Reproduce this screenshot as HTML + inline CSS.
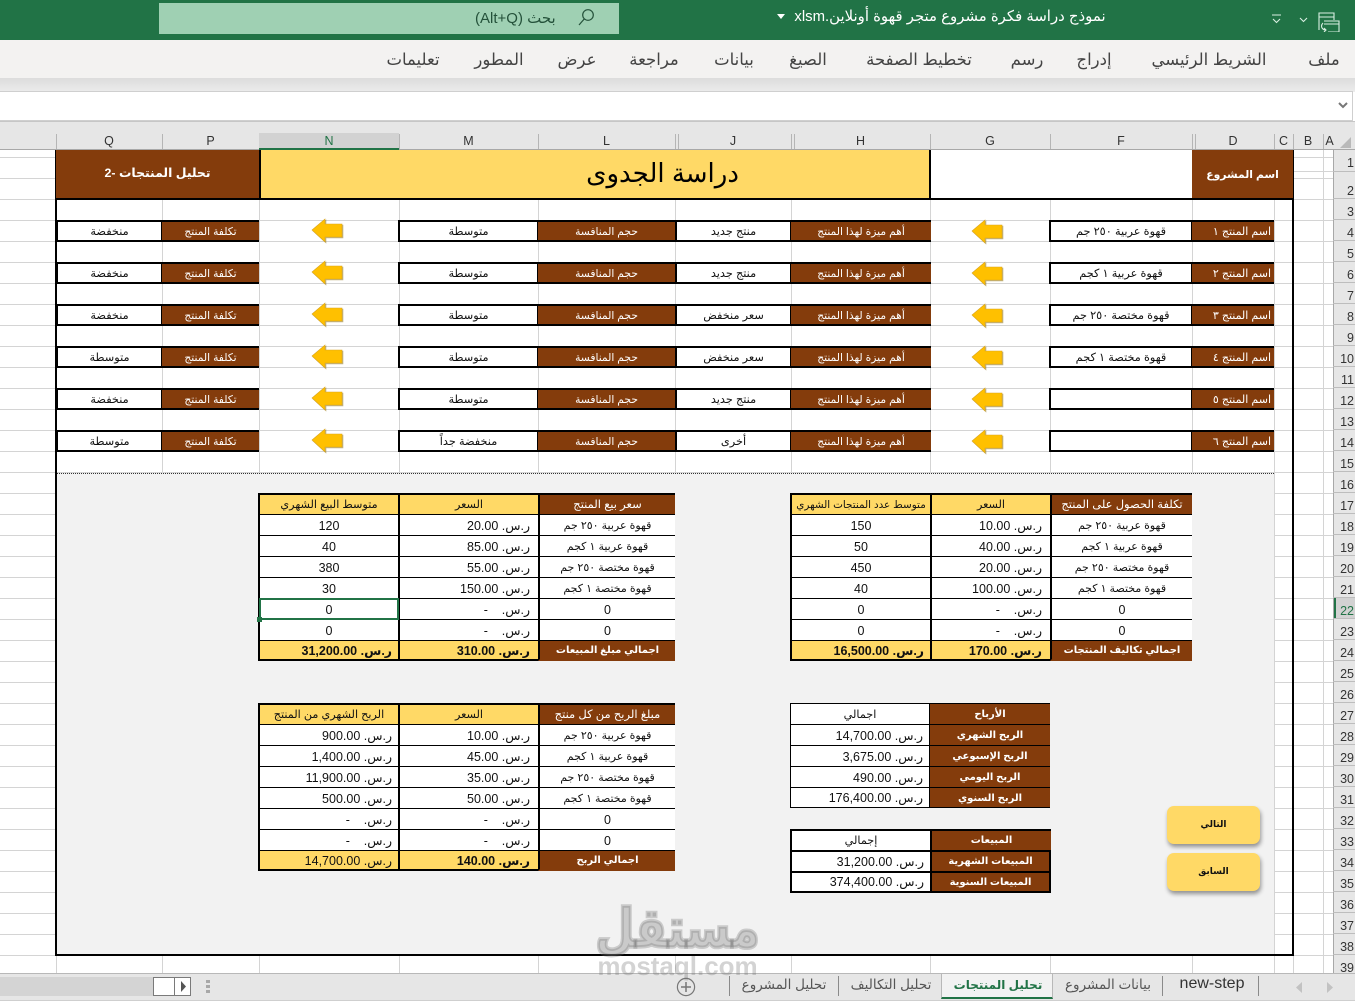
<!DOCTYPE html>
<html lang="ar"><head><meta charset="utf-8"><title>Excel</title>
<style>
*{box-sizing:border-box;margin:0;padding:0}
html,body{width:1355px;height:1001px;overflow:hidden;background:#fff;font-family:"Liberation Sans","DejaVu Sans",sans-serif;color:#111}
.a{position:absolute}
.t{position:absolute;white-space:nowrap;transform:translateX(-50%);direction:rtl}
.rib{top:50px;font-size:16.5px;line-height:20px;color:#444}
.cl{position:absolute;top:133px;height:16px;line-height:17px;text-align:center;font-size:12.5px;color:#333}
.v{position:absolute;top:150px;height:823px;width:1px;background:#d4d4d4}
.chs{position:absolute;top:134px;height:15px;width:1px;background:#b5b5b5}
#rows{position:absolute;left:1333px;top:199px;width:22px}
#rows i{display:block;height:21px;font-style:normal;font-size:12.5px;line-height:27px;text-align:right;padding-right:1px;color:#333;border-bottom:1px solid #bdbdbd}
.c{position:absolute;display:flex;align-items:center;justify-content:center;direction:rtl;white-space:nowrap;font-size:10.7px;height:22px}
.br{background:#843c0c;color:#fff}
.wb{background:#fff;border:2px solid #000;font-size:11.3px}
.br.x{border-top:2px solid #000;border-bottom:2px solid #000}
.br.n{justify-content:flex-start;padding-right:3px;font-size:11px}
table{position:absolute;border-collapse:separate;border-spacing:0;table-layout:fixed;font-size:12.5px}
td{height:21px;border-top:1px solid #000;text-align:center;white-space:nowrap;overflow:hidden;background:#fff;padding:2px 0 0;direction:rtl;line-height:18px}
td+td{border-left:2px solid #000}
td:first-child{border-left:2px solid #000}
tr:first-child td{border-top:2px solid #000;line-height:17px}
tr:last-child td{border-bottom:2px solid #000;line-height:16px;font-weight:bold}
td.y{background:#ffd966}
td.h{font-size:11.2px}
td.b{background:#843c0c;color:#fff;font-size:11.5px}
tr:last-child td.b{font-size:10px;border-bottom-color:#843c0c}
td.p{text-align:right;padding-right:8px}
td.p:first-child{padding-right:6px}
td.q{font-size:11px}
.thin td{border-left-width:1px!important;border-top-width:1px!important}
.thin tr:first-child td{line-height:18px}
.thin tr:last-child td{border-bottom-width:1px;line-height:17px;font-weight:normal}
.thin td.b,.thin tr:last-child td.b{font-weight:bold;font-size:10px;border-bottom-color:#000}
.thick td,.thick tr:first-child td{border-width:2px 0 0 2px;padding-top:1px;line-height:18px}
.thick td.b{font-weight:bold;font-size:10px}
.thick tr:last-child td{font-weight:normal;border-bottom:2px solid #000;line-height:17px}
.thick tr:last-child td.b{font-weight:bold;border-bottom:2px solid #000}
.thick td:last-child{border-right:2px solid #000}
.btn{position:absolute;left:1167px;width:93px;height:38px;border-radius:7px;background:#ffd966;box-shadow:1px 3px 4px rgba(0,0,0,.4);font-size:9px;font-weight:bold;display:flex;align-items:center;justify-content:center;direction:rtl;padding-bottom:2px}
.tab{position:absolute;top:975px;font-size:13.5px;line-height:20px;color:#555;white-space:nowrap;transform:translateX(-50%);direction:rtl}
.sep{position:absolute;top:976px;width:1px;height:20px;background:#8a8a8a}
</style></head><body>

<!-- title bar -->
<div class="a" style="left:0;top:0;width:1355px;height:40px;background:#217346"></div>
<div class="a" style="left:159px;top:3px;width:460px;height:31px;background:#9fd0b3"></div>
<div class="a" style="left:475px;top:10px;font-size:15px;line-height:18px;color:#24513a;direction:rtl;white-space:nowrap">بحث (Alt+Q)</div>
<svg class="a" style="left:576px;top:7px" width="20" height="20" viewBox="0 0 20 20" fill="none" stroke="#24513a" stroke-width="1.2"><circle cx="12" cy="8" r="5.3"/><path d="M8.2 12L3 18"/></svg>
<div class="t" style="left:950px;top:8px;font-size:14.9px;line-height:18px;color:#fff">نموذج دراسة فكرة مشروع متجر قهوة أونلاين.xlsm</div>
<svg class="a" style="left:777px;top:14px" width="8" height="6"><path d="M0 0h8L4 5z" fill="#fff"/></svg>
<svg class="a" style="left:1270px;top:12px" width="75" height="20" viewBox="0 0 75 20" fill="none" stroke="#d9efe2" stroke-width="1.1"><path d="M2 3h9M3 7l3.5 3.5L10 7M30 6l3.5 3.5L37 6"/><path d="M49 1h15v4H49zM49 5v13M64 5v3M54 9h15v11H58M54 12h15"/><path d="M53 11c-3 3-1 7 3 7m-2-2l2 2-2 2"/></svg>

<!-- ribbon -->
<div class="a" style="left:0;top:40px;width:1355px;height:38px;background:#f3f2f1"></div>
<div class="a" style="left:0;top:78px;width:1355px;height:14px;background:linear-gradient(#dcdcdc,#ececec)"></div>
<div class="t rib" style="left:1324px">ملف</div>
<div class="t rib" style="left:1209px">الشريط الرئيسي</div>
<div class="t rib" style="left:1094px">إدراج</div>
<div class="t rib" style="left:1027px">رسم</div>
<div class="t rib" style="left:919px">تخطيط الصفحة</div>
<div class="t rib" style="left:808px">الصيغ</div>
<div class="t rib" style="left:734px">بيانات</div>
<div class="t rib" style="left:654px">مراجعة</div>
<div class="t rib" style="left:577px">عرض</div>
<div class="t rib" style="left:499px">المطور</div>
<div class="t rib" style="left:413px">تعليمات</div>

<!-- formula bar -->
<div class="a" style="left:-2px;top:91px;width:1355px;height:30px;background:#fff;border:1px solid #cfcfcf"></div>
<svg class="a" style="left:1338px;top:102px" width="10" height="8"><path d="M1 1l4 4 4-4" fill="none" stroke="#777" stroke-width="2"/></svg>
<div class="a" style="left:0;top:121px;width:1355px;height:29px;background:#e6e6e6;border-top:1px solid #c6c6c6;border-bottom:1px solid #a8a8a8"></div>

<!-- col headers -->
<div class="a" style="left:259px;top:133px;width:140px;height:17px;background:#d2d2d2;border-bottom:2px solid #217346"></div>
<div class="cl" style="left:56px;width:106px">Q</div>
<div class="cl" style="left:162px;width:97px">P</div>
<div class="cl" style="left:259px;width:140px;color:#217346">N</div>
<div class="cl" style="left:399px;width:139px">M</div>
<div class="cl" style="left:538px;width:137px">L</div>
<div class="cl" style="left:675px;width:116px">J</div>
<div class="cl" style="left:791px;width:139px">H</div>
<div class="cl" style="left:930px;width:120px">G</div>
<div class="cl" style="left:1050px;width:142px">F</div>
<div class="cl" style="left:1192px;width:82px">D</div>
<div class="cl" style="left:1274px;width:19px">C</div>
<div class="cl" style="left:1293px;width:30px">B</div>
<div class="cl" style="left:1323px;width:13px">A</div>
<div class="chs" style="left:56px"></div><div class="chs" style="left:162px"></div><div class="chs" style="left:399px"></div><div class="chs" style="left:538px"></div><div class="chs" style="left:675px"></div><div class="chs" style="left:678px"></div><div class="chs" style="left:791px"></div><div class="chs" style="left:794px"></div><div class="chs" style="left:930px"></div><div class="chs" style="left:1050px"></div><div class="chs" style="left:1192px"></div><div class="chs" style="left:1195px"></div><div class="chs" style="left:1274px"></div><div class="chs" style="left:1293px"></div><div class="chs" style="left:1323px"></div>
<svg class="a" style="left:1339px;top:136px" width="13" height="13"><path d="M12 1v11H1z" fill="#b9b9b9"/></svg>

<!-- grid -->
<div class="a" style="left:0;top:150px;width:1333px;height:823px;background:linear-gradient(to bottom,#d4d4d4 1px,transparent 1px) 0 7px/100% 21px repeat-y"></div>
<div class="v" style="left:162px"></div><div class="v" style="left:259px"></div><div class="v" style="left:399px"></div><div class="v" style="left:538px"></div><div class="v" style="left:675px"></div><div class="v" style="left:791px"></div><div class="v" style="left:930px"></div><div class="v" style="left:1050px"></div><div class="v" style="left:1192px"></div><div class="v" style="left:1274px"></div><div class="v" style="left:1323px"></div><div class="v" style="left:56px"></div><div class="v" style="left:1293px"></div>
<div class="a" style="left:1293px;top:171px;width:40px;height:1px;background:#d4d4d4"></div>
<div class="a" style="left:930px;top:150px;width:262px;height:49px;background:#fff"></div>

<!-- row headers -->
<div class="a" style="left:1333px;top:150px;width:22px;height:823px;background:#e6e6e6;border-left:1px solid #a8a8a8"></div>
<div class="a" style="left:1334px;top:598px;width:21px;height:21px;background:#d2d2d2;border-left:2px solid #217346"></div>
<div class="a" style="left:1333px;top:150px;width:22px;height:22px;font-size:12.5px;line-height:26px;text-align:right;padding-right:1px;color:#333;border-bottom:1px solid #bdbdbd">1</div>
<div class="a" style="left:1333px;top:172px;width:22px;height:27px;font-size:12.5px;line-height:38px;text-align:right;padding-right:1px;color:#333;border-bottom:1px solid #bdbdbd">2</div>
<div id="rows"><i>3</i><i>4</i><i>5</i><i>6</i><i>7</i><i>8</i><i>9</i><i>10</i><i>11</i><i>12</i><i>13</i><i>14</i><i>15</i><i>16</i><i>17</i><i>18</i><i>19</i><i>20</i><i>21</i><i style="color:#217346">22</i><i>23</i><i>24</i><i>25</i><i>26</i><i>27</i><i>28</i><i>29</i><i>30</i><i>31</i><i>32</i><i>33</i><i>34</i><i>35</i><i>36</i><i>37</i><i>38</i><i style="height:18px;overflow:hidden;border:0">39</i></div>

<!-- gray panel & frame -->
<div class="a" style="left:56px;top:473px;width:1218px;height:482px;background:#f2f2f2;border-top:1px dotted #333"></div>
<div class="a" style="left:55px;top:150px;width:1239px;height:806px;border:2px solid #000;border-top:0"></div>

<!-- title row -->
<div class="c br" style="left:56px;top:150px;width:203px;height:50px;font-size:12.4px;font-weight:bold;border-bottom:2px solid #000;padding-bottom:3px">تحليل المنتجات -2</div>
<div class="a" style="left:259px;top:150px;width:672px;height:50px;background:#ffd966;border:solid #000;border-width:0 2px 2px 2px"></div>
<div class="c" style="left:259px;top:148px;width:807px;height:50px;font-size:26px;color:#000">دراسة الجدوى</div>
<div class="a" style="left:930px;top:198px;width:262px;height:2px;background:#000"></div>
<div class="c br" style="left:1192px;top:150px;width:101px;height:50px;font-size:10.8px;font-weight:bold;border-bottom:2px solid #000">اسم المشروع</div>

<!-- row 4 -->
<div class="c wb" style="left:56px;top:220px;width:107px">منخفضة</div><div class="c br x" style="left:162px;top:220px;width:97px">تكلفة المنتج</div>
<div class="c wb" style="left:398px;top:220px;width:141px">متوسطة</div><div class="c br x" style="left:538px;top:220px;width:137px">حجم المنافسة</div>
<div class="c wb" style="left:675px;top:220px;width:117px">منتج جديد</div><div class="c br x" style="left:791px;top:220px;width:140px">أهم ميزة لهذا المنتج</div>
<div class="c wb" style="left:1049px;top:220px;width:144px">قهوة عربية ٢٥٠ جم</div><div class="c br x n" style="left:1192px;top:220px;width:82px">اسم المنتج ١</div>
<!-- row 6 -->
<div class="c wb" style="left:56px;top:262px;width:107px">منخفضة</div><div class="c br x" style="left:162px;top:262px;width:97px">تكلفة المنتج</div>
<div class="c wb" style="left:398px;top:262px;width:141px">متوسطة</div><div class="c br x" style="left:538px;top:262px;width:137px">حجم المنافسة</div>
<div class="c wb" style="left:675px;top:262px;width:117px">منتج جديد</div><div class="c br x" style="left:791px;top:262px;width:140px">أهم ميزة لهذا المنتج</div>
<div class="c wb" style="left:1049px;top:262px;width:144px">قهوة عربية ١ كجم</div><div class="c br x n" style="left:1192px;top:262px;width:82px">اسم المنتج ٢</div>
<!-- row 8 -->
<div class="c wb" style="left:56px;top:304px;width:107px">منخفضة</div><div class="c br x" style="left:162px;top:304px;width:97px">تكلفة المنتج</div>
<div class="c wb" style="left:398px;top:304px;width:141px">متوسطة</div><div class="c br x" style="left:538px;top:304px;width:137px">حجم المنافسة</div>
<div class="c wb" style="left:675px;top:304px;width:117px">سعر منخفض</div><div class="c br x" style="left:791px;top:304px;width:140px">أهم ميزة لهذا المنتج</div>
<div class="c wb" style="left:1049px;top:304px;width:144px">قهوة مختصة ٢٥٠ جم</div><div class="c br x n" style="left:1192px;top:304px;width:82px">اسم المنتج ٣</div>
<!-- row 10 -->
<div class="c wb" style="left:56px;top:346px;width:107px">متوسطة</div><div class="c br x" style="left:162px;top:346px;width:97px">تكلفة المنتج</div>
<div class="c wb" style="left:398px;top:346px;width:141px">متوسطة</div><div class="c br x" style="left:538px;top:346px;width:137px">حجم المنافسة</div>
<div class="c wb" style="left:675px;top:346px;width:117px">سعر منخفض</div><div class="c br x" style="left:791px;top:346px;width:140px">أهم ميزة لهذا المنتج</div>
<div class="c wb" style="left:1049px;top:346px;width:144px">قهوة مختصة ١ كجم</div><div class="c br x n" style="left:1192px;top:346px;width:82px">اسم المنتج ٤</div>
<!-- row 12 -->
<div class="c wb" style="left:56px;top:388px;width:107px">منخفضة</div><div class="c br x" style="left:162px;top:388px;width:97px">تكلفة المنتج</div>
<div class="c wb" style="left:398px;top:388px;width:141px">متوسطة</div><div class="c br x" style="left:538px;top:388px;width:137px">حجم المنافسة</div>
<div class="c wb" style="left:675px;top:388px;width:117px">منتج جديد</div><div class="c br x" style="left:791px;top:388px;width:140px">أهم ميزة لهذا المنتج</div>
<div class="c wb" style="left:1049px;top:388px;width:144px"></div><div class="c br x n" style="left:1192px;top:388px;width:82px">اسم المنتج ٥</div>
<!-- row 14 -->
<div class="c wb" style="left:56px;top:430px;width:107px">متوسطة</div><div class="c br x" style="left:162px;top:430px;width:97px">تكلفة المنتج</div>
<div class="c wb" style="left:398px;top:430px;width:141px">منخفضة جداً</div><div class="c br x" style="left:538px;top:430px;width:137px">حجم المنافسة</div>
<div class="c wb" style="left:675px;top:430px;width:117px">أخرى</div><div class="c br x" style="left:791px;top:430px;width:140px">أهم ميزة لهذا المنتج</div>
<div class="c wb" style="left:1049px;top:430px;width:144px"></div><div class="c br x n" style="left:1192px;top:430px;width:82px">اسم المنتج ٦</div>

<!-- arrows -->
<svg class="a" style="left:0;top:0;filter:drop-shadow(1px 1px 0 rgba(130,100,0,.5))" width="1100" height="460">
<defs><path id="ar" d="M0 11L13 0V5H30V18H13V23z" fill="#ffc000" stroke="#d9a520" stroke-width=".6"/></defs>
<use href="#ar" x="312" y="219"/><use href="#ar" x="972" y="220"/>
<use href="#ar" x="312" y="261"/><use href="#ar" x="972" y="262"/>
<use href="#ar" x="312" y="303"/><use href="#ar" x="972" y="304"/>
<use href="#ar" x="312" y="345"/><use href="#ar" x="972" y="346"/>
<use href="#ar" x="312" y="387"/><use href="#ar" x="972" y="388"/>
<use href="#ar" x="312" y="429"/><use href="#ar" x="972" y="430"/>
</svg>

<!-- Table A -->
<table style="left:258px;top:493px;width:417px">
<colgroup><col style="width:140px"><col style="width:140px"><col style="width:137px"></colgroup>
<tr><td class="y h">متوسط البيع الشهري</td><td class="y h">السعر</td><td class="b">سعر بيع المنتج</td></tr>
<tr><td>120</td><td class="p">ر.س. 20.00</td><td class="q">قهوة عربية ٢٥٠ جم</td></tr>
<tr><td>40</td><td class="p">ر.س. 85.00</td><td class="q">قهوة عربية ١ كجم</td></tr>
<tr><td>380</td><td class="p">ر.س. 55.00</td><td class="q">قهوة مختصة ٢٥٠ جم</td></tr>
<tr><td>30</td><td class="p">ر.س. 150.00</td><td class="q">قهوة مختصة ١ كجم</td></tr>
<tr><td>0</td><td class="p">ر.س.&nbsp;&nbsp;&nbsp; -</td><td>0</td></tr>
<tr><td>0</td><td class="p">ر.س.&nbsp;&nbsp;&nbsp; -</td><td>0</td></tr>
<tr><td class="y p">ر.س. 31,200.00</td><td class="y p">ر.س. 310.00</td><td class="b">اجمالي مبلغ المبيعات</td></tr>
</table>
<div class="a" style="left:259px;top:598px;width:140px;height:22px;border:2px solid #217346"></div>
<div class="a" style="left:257px;top:617px;width:5px;height:5px;background:#217346"></div>

<!-- Table B -->
<table style="left:790px;top:493px;width:402px">
<colgroup><col style="width:140px"><col style="width:120px"><col style="width:142px"></colgroup>
<tr><td class="y h" style="font-size:10.4px">متوسط عدد المنتجات الشهري</td><td class="y h">السعر</td><td class="b">تكلفة الحصول على المنتج</td></tr>
<tr><td>150</td><td class="p">ر.س. 10.00</td><td class="q">قهوة عربية ٢٥٠ جم</td></tr>
<tr><td>50</td><td class="p">ر.س. 40.00</td><td class="q">قهوة عربية ١ كجم</td></tr>
<tr><td>450</td><td class="p">ر.س. 20.00</td><td class="q">قهوة مختصة ٢٥٠ جم</td></tr>
<tr><td>40</td><td class="p">ر.س. 100.00</td><td class="q">قهوة مختصة ١ كجم</td></tr>
<tr><td>0</td><td class="p">ر.س.&nbsp;&nbsp;&nbsp; -</td><td>0</td></tr>
<tr><td>0</td><td class="p">ر.س.&nbsp;&nbsp;&nbsp; -</td><td>0</td></tr>
<tr><td class="y p">ر.س. 16,500.00</td><td class="y p">ر.س. 170.00</td><td class="b">اجمالي تكاليف المنتجات</td></tr>
</table>

<!-- Table C -->
<table style="left:258px;top:703px;width:417px">
<colgroup><col style="width:140px"><col style="width:140px"><col style="width:137px"></colgroup>
<tr><td class="y h">الربح الشهري من المنتج</td><td class="y h">السعر</td><td class="b">مبلغ الربح من كل منتج</td></tr>
<tr><td class="p">ر.س. 900.00</td><td class="p">ر.س. 10.00</td><td class="q">قهوة عربية ٢٥٠ جم</td></tr>
<tr><td class="p">ر.س. 1,400.00</td><td class="p">ر.س. 45.00</td><td class="q">قهوة عربية ١ كجم</td></tr>
<tr><td class="p">ر.س. 11,900.00</td><td class="p">ر.س. 35.00</td><td class="q">قهوة مختصة ٢٥٠ جم</td></tr>
<tr><td class="p">ر.س. 500.00</td><td class="p">ر.س. 50.00</td><td class="q">قهوة مختصة ١ كجم</td></tr>
<tr><td class="p">ر.س.&nbsp;&nbsp;&nbsp; -</td><td class="p">ر.س.&nbsp;&nbsp;&nbsp; -</td><td>0</td></tr>
<tr><td class="p">ر.س.&nbsp;&nbsp;&nbsp; -</td><td class="p">ر.س.&nbsp;&nbsp;&nbsp; -</td><td>0</td></tr>
<tr><td class="y p" style="font-weight:normal">ر.س. 14,700.00</td><td class="y p">ر.س. 140.00</td><td class="b">اجمالي الربح</td></tr>
</table>

<!-- Table D -->
<table class="thin" style="left:790px;top:703px;width:260px">
<colgroup><col style="width:139px"><col style="width:121px"></colgroup>
<tr><td class="h">اجمالي</td><td class="b">الأرباح</td></tr>
<tr><td class="p">ر.س. 14,700.00</td><td class="b">الربح الشهري</td></tr>
<tr><td class="p">ر.س. 3,675.00</td><td class="b">الربح الإسبوعي</td></tr>
<tr><td class="p">ر.س. 490.00</td><td class="b">الربح اليومي</td></tr>
<tr><td class="p">ر.س. 176,400.00</td><td class="b">الربح السنوي</td></tr>
</table>

<!-- Table E -->
<table class="thick" style="left:790px;top:829px;width:261px">
<colgroup><col style="width:140px"><col style="width:121px"></colgroup>
<tr><td class="h">إجمالي</td><td class="b">المبيعات</td></tr>
<tr><td class="p">ر.س. 31,200.00</td><td class="b">المبيعات الشهرية</td></tr>
<tr><td class="p">ر.س. 374,400.00</td><td class="b">المبيعات السنوية</td></tr>
</table>

<div class="btn" style="top:806px">التالي</div>
<div class="btn" style="top:853px">السابق</div>

<!-- tab bar -->
<div class="a" style="left:0;top:973px;width:1355px;height:28px;background:#e6e6e6;border-top:1px solid #b8b8b8;border-bottom:1px solid #cfcfcf"></div>
<div class="a" style="left:0;top:977px;width:153px;height:19px;background:#d4d4d4"></div>
<div class="a" style="left:153px;top:977px;width:22px;height:19px;background:#fff;border:1px solid #7a7a7a"></div>
<div class="a" style="left:174px;top:977px;width:17px;height:19px;background:#fff;border:1px solid #7a7a7a"></div>
<svg class="a" style="left:180px;top:981px" width="7" height="11"><path d="M1 0l5 5.5L1 11z" fill="#555"/></svg>
<svg class="a" style="left:206px;top:980px" width="4" height="14"><path d="M0 0h4v3H0zM0 5h4v3H0zM0 10h4v3H0z" fill="#a8a8a8"/></svg>
<svg class="a" style="left:676px;top:977px" width="20" height="20" fill="none" stroke="#777" stroke-width="1.2"><circle cx="10" cy="10" r="8.6"/><path d="M10 5v10M5 10h10" stroke-width="1.5"/></svg>
<div class="sep" style="left:729px"></div>
<div class="tab" style="left:784px">تحليل المشروع</div>
<div class="sep" style="left:838px"></div>
<div class="tab" style="left:891px">تحليل التكاليف</div>
<div class="a" style="left:941px;top:973px;width:112px;height:26px;background:#f2f2f2;border:1px solid #b8b8b8;border-bottom:2px solid #217346"></div>
<div class="tab" style="left:998px;color:#217346;font-weight:bold;font-size:12px">تحليل المنتجات</div>
<div class="tab" style="left:1108px">بيانات المشروع</div>
<div class="sep" style="left:1162px"></div>
<div class="tab" style="left:1212px;font-size:16px;color:#333;direction:ltr;top:974px">new-step</div>
<div class="sep" style="left:1258px"></div>
<svg class="a" style="left:1296px;top:982px" width="40" height="11" fill="#c2c2c2"><path d="M6 0v11L0 5.5zM31 0l6 5.5-6 5.5z"/></svg>

<!-- watermark -->
<div class="a" style="left:560px;top:894px;width:235px;text-align:center;font-size:45px;line-height:70px;font-weight:bold;color:rgba(110,110,110,.3);-webkit-text-stroke:3px rgba(110,110,110,.3);paint-order:stroke fill;direction:rtl;white-space:nowrap;transform:scaleY(1.2)">مستقل</div>
<div class="a" style="left:560px;top:951px;width:235px;text-align:center;font-size:26px;line-height:30px;font-weight:bold;color:rgba(110,110,110,.3);white-space:nowrap">mostaql.com</div>

</body></html>
